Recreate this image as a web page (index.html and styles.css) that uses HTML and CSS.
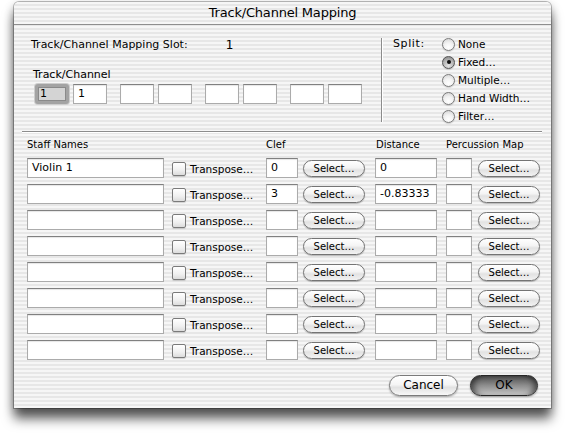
FILE: index.html
```html
<!DOCTYPE html>
<html>
<head>
<meta charset="utf-8">
<title>Track/Channel Mapping</title>
<link rel="stylesheet" href="styles.css">
</head>
<body>
<div class="desk">
<div class="window">
  <div class="titlebar">Track/Channel Mapping</div>
  <div class="top">
    <div class="slot-panel">
      <div class="slot-line"><span class="slot-label">Track/Channel Mapping Slot:</span><span class="slot-value">1</span></div>
      <div class="tc-label">Track/Channel</div>
      <div class="tc-fields">
        <div class="pair"><div class="fld tc focus"><span class="sel">1</span></div><div class="fld tc">1</div></div>
        <div class="pair"><div class="fld tc"></div><div class="fld tc"></div></div>
        <div class="pair"><div class="fld tc"></div><div class="fld tc"></div></div>
        <div class="pair"><div class="fld tc"></div><div class="fld tc"></div></div>
      </div>
    </div>
    <div class="vdivider"></div>
    <div class="split-panel">
      <div class="split-label">Split:</div>
      <div class="radios">
        <div class="radio-row"><span class="radio"></span>None</div>
        <div class="radio-row"><span class="radio on"></span>Fixed…</div>
        <div class="radio-row"><span class="radio"></span>Multiple…</div>
        <div class="radio-row"><span class="radio"></span>Hand Width…</div>
        <div class="radio-row"><span class="radio"></span>Filter…</div>
      </div>
    </div>
  </div>
  <div class="hsep"></div>
  <div class="table">
    <div class="hdr c1">Staff Names</div>
    <div class="hdr c3">Clef</div>
    <div class="hdr c5">Distance</div>
    <div class="hdr c6">Percussion Map</div>

    <div class="fld name">Violin 1</div>
    <div class="trans"><span class="check"></span>Transpose…</div>
    <div class="fld clef">0</div>
    <div class="sbtn">Select…</div>
    <div class="fld dist">0</div>
    <div class="fld perc"></div>
    <div class="sbtn">Select…</div>

    <div class="fld name"></div>
    <div class="trans"><span class="check"></span>Transpose…</div>
    <div class="fld clef">3</div>
    <div class="sbtn">Select…</div>
    <div class="fld dist">-0.83333</div>
    <div class="fld perc"></div>
    <div class="sbtn">Select…</div>

    <div class="fld name"></div>
    <div class="trans"><span class="check"></span>Transpose…</div>
    <div class="fld clef"></div>
    <div class="sbtn">Select…</div>
    <div class="fld dist"></div>
    <div class="fld perc"></div>
    <div class="sbtn">Select…</div>

    <div class="fld name"></div>
    <div class="trans"><span class="check"></span>Transpose…</div>
    <div class="fld clef"></div>
    <div class="sbtn">Select…</div>
    <div class="fld dist"></div>
    <div class="fld perc"></div>
    <div class="sbtn">Select…</div>

    <div class="fld name"></div>
    <div class="trans"><span class="check"></span>Transpose…</div>
    <div class="fld clef"></div>
    <div class="sbtn">Select…</div>
    <div class="fld dist"></div>
    <div class="fld perc"></div>
    <div class="sbtn">Select…</div>

    <div class="fld name"></div>
    <div class="trans"><span class="check"></span>Transpose…</div>
    <div class="fld clef"></div>
    <div class="sbtn">Select…</div>
    <div class="fld dist"></div>
    <div class="fld perc"></div>
    <div class="sbtn">Select…</div>

    <div class="fld name"></div>
    <div class="trans"><span class="check"></span>Transpose…</div>
    <div class="fld clef"></div>
    <div class="sbtn">Select…</div>
    <div class="fld dist"></div>
    <div class="fld perc"></div>
    <div class="sbtn">Select…</div>

    <div class="fld name"></div>
    <div class="trans"><span class="check"></span>Transpose…</div>
    <div class="fld clef"></div>
    <div class="sbtn">Select…</div>
    <div class="fld dist"></div>
    <div class="fld perc"></div>
    <div class="sbtn">Select…</div>
  </div>
  <div class="actions">
    <div class="btn cancel">Cancel</div>
    <div class="btn ok">OK</div>
  </div>
</div>
</div>
</body>
</html>
```

FILE: styles.css
```css
html, body {
  margin: 0;
  padding: 0;
  background: #ffffff;
}
body {
  font-family: "DejaVu Sans", "Liberation Sans", sans-serif;
  color: #000;
  font-size: 11px;
}
.desk {
  box-sizing: border-box;
  width: 566px;
  height: 433px;
  padding: 2px 0 0 14px;
  overflow: hidden;
}
.window {
  width: 537px;
  padding-bottom: 12px;
  border-radius: 5px 5px 0 0;
  background: repeating-linear-gradient(to bottom, #f6f6f6 0 2px, #e7e7e7 2px 4px);
  box-shadow: 0 0 0 1px rgba(0,0,0,0.25), 0 11px 12px rgba(0,0,0,0.6), 0 3px 10px rgba(0,0,0,0.3);
}
.titlebar {
  height: 22px;
  line-height: 22px;
  text-align: center;
  font-size: 13px;
  letter-spacing: -0.2px;
  border-bottom: 1px solid #8e8e8e;
  border-radius: 5px 5px 0 0;
}
.top {
  display: flex;
  height: 106px;
}
.slot-panel {
  width: 350px;
  padding: 13px 0 0 17px;
}
.slot-line {
  height: 14px;
  line-height: 14px;
  display: flex;
}
.slot-value {
  margin-left: 38px;
  font-size: 12px;
}
.tc-label {
  margin-top: 16px;
  padding-left: 2px;
  height: 14px;
  line-height: 14px;
}
.tc-fields {
  margin-top: 2px;
  padding-left: 4px;
  display: flex;
  gap: 13px;
}
.pair {
  display: flex;
  gap: 4px;
}
.fld {
  box-sizing: border-box;
  height: 20px;
  background: #fff;
  border: 1px solid #ababab;
  border-top-color: #808080;
  box-shadow: inset 0 1px 1px rgba(0,0,0,0.1);
  padding-left: 4px;
  line-height: 18px;
  font-size: 11px;
  white-space: nowrap;
  overflow: hidden;
}
.fld.tc {
  width: 34px;
}
.fld.focus {
  border: 3px solid #a3a3a3;
  border-radius: 3px;
  box-shadow: 0 0 0 1px #cdcdcd, inset 0 0 0 1px #8a8a8a;
  background: #fff;
  padding: 1px;
  line-height: 12px;
}
.sel {
  display: block;
  height: 12px;
  background: #d4d4d4;
  padding-left: 1px;
}
.vdivider {
  width: 1px;
  margin-top: 13px;
  height: 84px;
  background: #8c8c8c;
  box-shadow: 1px 0 0 #ffffff;
}
.split-panel {
  display: flex;
  padding: 10px 0 0 11px;
}
.split-label {
  width: 49px;
  height: 18px;
  line-height: 18px;
  letter-spacing: 0.6px;
}
.radios {
  display: flex;
  flex-direction: column;
}
.radio-row {
  height: 18px;
  display: flex;
  align-items: center;
  font-size: 10.5px;
}
.radio {
  box-sizing: border-box;
  width: 13px;
  height: 13px;
  border-radius: 50%;
  border: 1px solid #7a7a7a;
  background: radial-gradient(circle at 50% 75%, #ffffff 0, #f2f2f2 45%, #cfcfcf 100%);
  margin-right: 3px;
  display: flex;
  align-items: center;
  justify-content: center;
  box-shadow: 0 1px 1px rgba(0,0,0,0.15);
}
.radio.on {
  border-color: #555;
  background: radial-gradient(circle at 50% 80%, #e4e4e4 0, #b4b4b4 55%, #7d7d7d 100%);
}
.radio.on::after {
  content: "";
  width: 4px;
  height: 4px;
  border-radius: 50%;
  background: #111;
}
.hsep {
  height: 1px;
  margin: 0 9px 0 8px;
  background: #8c8c8c;
  box-shadow: 0 1px 0 #ffffff;
}
.table {
  display: grid;
  grid-template-columns: 145px 94px 37px 72px 71px 32px 62px;
  grid-template-rows: 14px repeat(8, 20px);
  row-gap: 6px;
  padding: 6px 0 0 13px;
}
.hdr {
  font-size: 10px;
  line-height: 14px;
  white-space: nowrap;
}
.hdr.c1 { grid-column: 1; }
.hdr.c3 { grid-column: 3 / span 2; }
.hdr.c5 { grid-column: 5; padding-left: 1px; }
.hdr.c6 { grid-column: 6 / span 2; }
.fld.name { width: 137px; }
.fld.clef { width: 32px; }
.fld.dist { width: 62px; }
.fld.perc { width: 26px; }
.trans {
  display: flex;
  align-items: center;
  font-size: 10.5px;
  padding-top: 2px;
}
.check {
  box-sizing: border-box;
  width: 14px;
  height: 14px;
  border: 1px solid #7a7a7a;
  border-radius: 2px;
  background: linear-gradient(to bottom, #ffffff 0%, #f0f0f0 60%, #dcdcdc 100%);
  box-shadow: 0 1px 1px rgba(0,0,0,0.15);
  margin-right: 4px;
}
.sbtn {
  box-sizing: border-box;
  width: 62px;
  height: 17px;
  align-self: center;
  margin-top: 1px;
  border: 1px solid #747474;
  border-radius: 9px;
  background: linear-gradient(to bottom, #ffffff 0%, #f4f4f4 45%, #e2e2e2 60%, #f2f2f2 100%);
  box-shadow: 0 1px 1px rgba(0,0,0,0.25);
  text-align: center;
  font-size: 10px;
  line-height: 15px;
}
.actions {
  display: flex;
  justify-content: flex-end;
  gap: 12px;
  margin-top: 15px;
  padding-right: 13px;
}
.btn {
  box-sizing: border-box;
  height: 21px;
  border-radius: 11px;
  text-align: center;
  font-size: 12px;
  line-height: 19px;
}
.btn.cancel {
  width: 69px;
  border: 1px solid #7a7a7a;
  background: linear-gradient(to bottom, #ffffff 0%, #f5f5f5 45%, #e2e2e2 60%, #f7f7f7 100%);
  box-shadow: 0 1px 2px rgba(0,0,0,0.3);
}
.btn.ok {
  width: 68px;
  border: 1px solid #262626;
  background: linear-gradient(to bottom, #4a4a4a 0%, #6e6e6e 25%, #8e8e8e 50%, #a9a9a9 75%, #cdcdcd 100%);
  box-shadow: inset 7px 0 6px -4px rgba(0,0,0,0.55), inset -7px 0 6px -4px rgba(0,0,0,0.55), 0 1px 2px rgba(0,0,0,0.35);
}
```
